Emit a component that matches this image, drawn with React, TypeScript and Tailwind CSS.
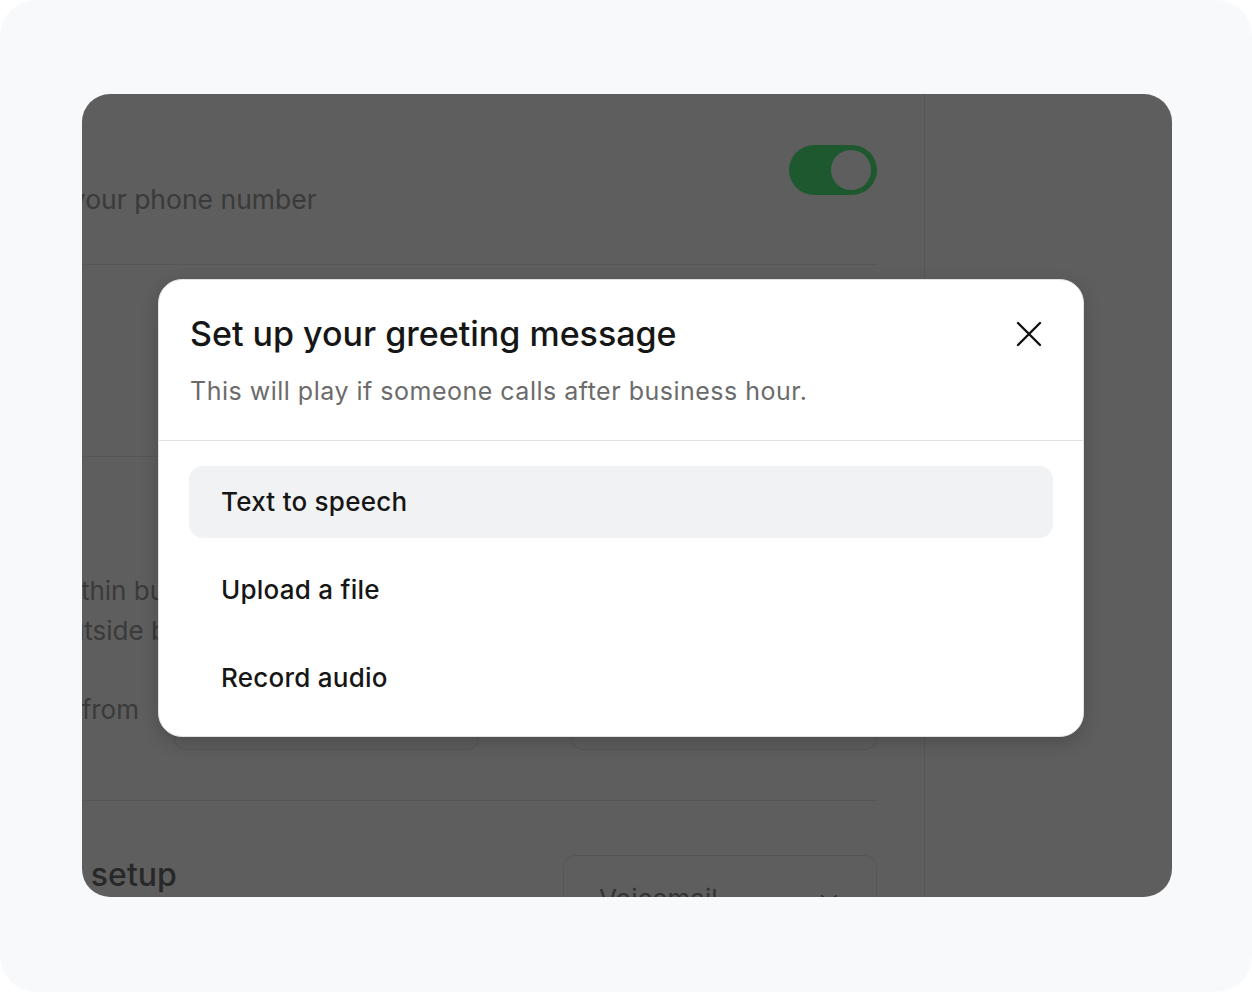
import type React from "react";

const options = ["Text to speech", "Upload a file", "Record audio"];

const CloseIcon: React.FC = () => (
	<svg width="26" height="26" viewBox="0 0 26 26" fill="none">
		<path
			d="M2 2 24 24M24 2 2 24"
			stroke="#111111"
			strokeWidth="2.4"
			strokeLinecap="round"
		/>
	</svg>
);

const ChevronDown: React.FC = () => (
	<svg width="24" height="24" viewBox="0 0 24 24" fill="none">
		<path
			d="M5 9l7 7 7-7"
			stroke="#8a8a8a"
			strokeWidth="2"
			strokeLinecap="round"
			strokeLinejoin="round"
		/>
	</svg>
);

// Settings page sitting behind the dialog (shown dimmed)
const SettingsPage: React.FC = () => (
	<div className="flex h-full">
		<div className="-ml-[222px] w-[1065px] shrink-0 border-r border-[#e6e6e6] pr-[47px]">
			<section className="flex h-[171px] items-start justify-between border-b border-[#e9e9e9] pt-[51px]">
				<div className="flex flex-col">
					<div className="text-[26px] font-medium leading-[36px] text-[#6c6c6c]">
						Forwarding
					</div>
					<div className="whitespace-nowrap pl-[4px] text-[26.5px] leading-[36px] text-[#9e9e9e]">
						Forward calls to your phone number
					</div>
				</div>
				<div className="flex h-[50px] w-[88px] items-center justify-end rounded-full bg-[#51ee7c] pr-[6px]">
					<div className="h-[40px] w-[40px] rounded-full bg-white" />
				</div>
			</section>
			<section className="h-[192px] border-b border-[#e9e9e9] pt-[48px]">
				<div className="text-[26px] font-medium leading-[36px] text-[#6c6c6c]">
					Greeting
				</div>
			</section>
			<section className="flex h-[344px] flex-col border-b border-[#e9e9e9] pt-[48px]">
				<div className="text-[26px] font-medium leading-[36px] text-[#6c6c6c]">
					Hours
				</div>
				<div className="mt-[32px] flex flex-col gap-[4px] pl-[189px] text-[26px] leading-[36px] text-[#9e9e9e]">
					<div className="whitespace-nowrap">Within business hours</div>
					<div className="whitespace-nowrap">Outside business hours</div>
				</div>
				<div className="mt-[43px] flex items-start justify-between">
					<div className="shrink-0 whitespace-nowrap pl-[148px] text-[26px] leading-[36px] text-[#9e9e9e]">
						Open from
					</div>
					<div className="flex items-center gap-[92px]">
						<div className="h-[58px] w-[305px] rounded-[12px] border-[1.5px] border-[#e6e6e6]" />
						<div className="h-[58px] w-[306px] rounded-[12px] border-[1.5px] border-[#e6e6e6]" />
					</div>
				</div>
			</section>
			<section className="flex items-start justify-between pt-[54px]">
				<div className="whitespace-nowrap pl-[74px] pt-[2px] text-[32px] font-medium leading-[36px] text-[#6c6c6c]">
					Voicemail setup
				</div>
				<div className="flex h-[76px] w-[314px] shrink-0 items-center justify-between rounded-[12px] border-[1.5px] border-[#e6e6e6] px-[35px] pt-[12px]">
					<span className="text-[26px] leading-[36px] text-[#8a8a8a]">
						Voicemail
					</span>
					<ChevronDown />
				</div>
			</section>
		</div>
		<div className="flex-1" />
	</div>
);

const GreetingDialog: React.FC = () => (
	<div className="absolute left-[76px] top-[185px] w-[926px] overflow-hidden rounded-[24px] border border-[#e2e2e2] bg-white shadow-[0_6px_18px_rgba(0,0,0,0.18)]">
		<div className="border-b border-[#e2e2e2] px-[31px] pb-[33px] pt-[33px]">
			<div className="flex items-center justify-between">
				<h2 className="text-[34px] font-medium leading-[40px] text-[#161616]">
					Set up your greeting message
				</h2>
				<button className="mr-[2px] flex h-[42px] w-[42px] items-center justify-center">
					<CloseIcon />
				</button>
			</div>
			<p className="mt-[20px] text-[25px] leading-[32px] tracking-[0.5px] text-[#6b6b6b]">
				This will play if someone calls after business hour.
			</p>
		</div>
		<ul className="flex flex-col gap-[16px] px-[30px] pb-[22px] pt-[25px]">
			{options.map((label, idx) => (
				<li
					key={label}
					className={`flex h-[72px] items-center rounded-[14px] px-[32px] text-[26px] font-medium leading-[32px] tracking-[0.25px] text-[#161616] ${
						idx === 0 ? "bg-[#f1f2f3]" : ""
					}`}
				>
					{label}
				</li>
			))}
		</ul>
	</div>
);

export default function App() {
	return (
		<div className="min-h-screen bg-white font-['Inter',sans-serif]">
			<div className="h-[992px] w-[1252px] rounded-[36px] bg-[#f8f9fa] pl-[82px] pt-[94px]">
				<div className="relative h-[803px] w-[1090px] overflow-hidden rounded-[28px] bg-white">
					<SettingsPage />
					<div className="absolute inset-0 bg-black/[0.63]" />
					<GreetingDialog />
				</div>
			</div>
		</div>
	);
}
